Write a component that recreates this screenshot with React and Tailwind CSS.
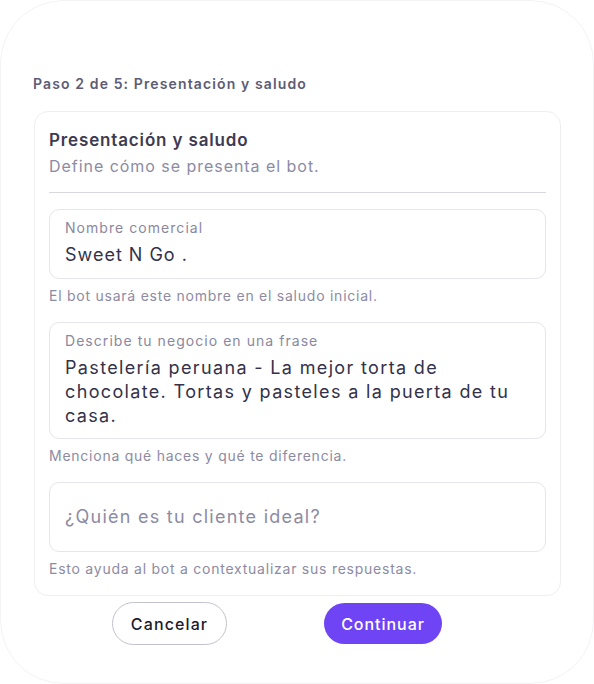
import React from "react";

const font = { fontFamily: "Inter, 'Noto Sans', sans-serif" };

const Field = ({ label, children }) => (
  <div className="rounded-[10px] border border-[#e6e5ec] bg-white px-[15px] pt-[8px] pb-[10px]">
    {label && (
      <p className="text-[14px] leading-[20px] tracking-[0.075em] text-[#8a889e]">{label}</p>
    )}
    {children}
  </div>
);

const Help = ({ children }) => (
  <p className="mt-[7px] text-[14px] leading-[20px] tracking-[0.054em] text-[#8d8ba3]">
    {children}
  </p>
);

export default function App() {
  return (
    <div
      className="w-[594px] h-[684px] bg-white rounded-[64px] border border-[#f3f3f6] px-[32px] pt-[73px]"
      style={font}
    >
      {/* Step header */}
      <p className="text-[14px] leading-[20px] font-semibold tracking-[0.08em] text-[#5d5c74]">
        Paso 2 de 5: Presentación y saludo
      </p>

      {/* Card */}
      <div className="mt-[17px] ml-px rounded-[14px] border border-[#efeff3] px-[14px] pt-[16px] pb-[16px]">
        <h2 className="text-[17px] leading-[24px] font-semibold tracking-[0.05em] text-[#3c3b52]">
          Presentación y saludo
        </h2>
        <p className="mt-[2px] text-[16px] leading-[24px] tracking-[0.06em] text-[#8d8ba3]">
          Define cómo se presenta el bot.
        </p>
        <div className="mt-[14px] h-px bg-[#d9d8e0]" />

        <div className="mt-[16px]">
          <Field label="Nombre comercial">
            <p className="mt-[4px] text-[18px] leading-[26px] tracking-[0.055em] text-[#33324a]">
              Sweet N Go .
            </p>
          </Field>
          <Help>El bot usará este nombre en el saludo inicial.</Help>
        </div>

        <div className="mt-[16px]">
          <Field label="Describe tu negocio en una frase">
            <p className="mt-[5px] text-[18px] leading-[24px] tracking-[0.075em] text-[#33324a]">
              Pastelería peruana - La mejor torta de
              <br />
              chocolate. Tortas y pasteles a la puerta de tu
              <br />
              casa.
            </p>
          </Field>
          <Help>Menciona qué haces y qué te diferencia.</Help>
        </div>

        <div className="mt-[16px]">
          <div className="h-[70px] rounded-[10px] border border-[#e6e5ec] px-[15px] flex items-center">
            <p className="text-[18px] leading-[26px] tracking-[0.07em] text-[#8d8ba3]">
              ¿Quién es tu cliente ideal?
            </p>
          </div>
          <Help>Esto ayuda al bot a contextualizar sus respuestas.</Help>
        </div>
      </div>

      {/* Actions */}
      <div className="mt-[6px] flex items-center pl-[79px] gap-[97px]">
        <button className="h-[43px] w-[115px] rounded-full border border-[#c3c2cc] bg-white text-[16px] font-medium tracking-[0.07em] text-[#1c1b2b]">
          Cancelar
        </button>
        <button className="h-[41px] w-[118px] rounded-full bg-[#6e44f4] text-[16px] font-medium tracking-[0.06em] text-white">
          Continuar
        </button>
      </div>
    </div>
  );
}
